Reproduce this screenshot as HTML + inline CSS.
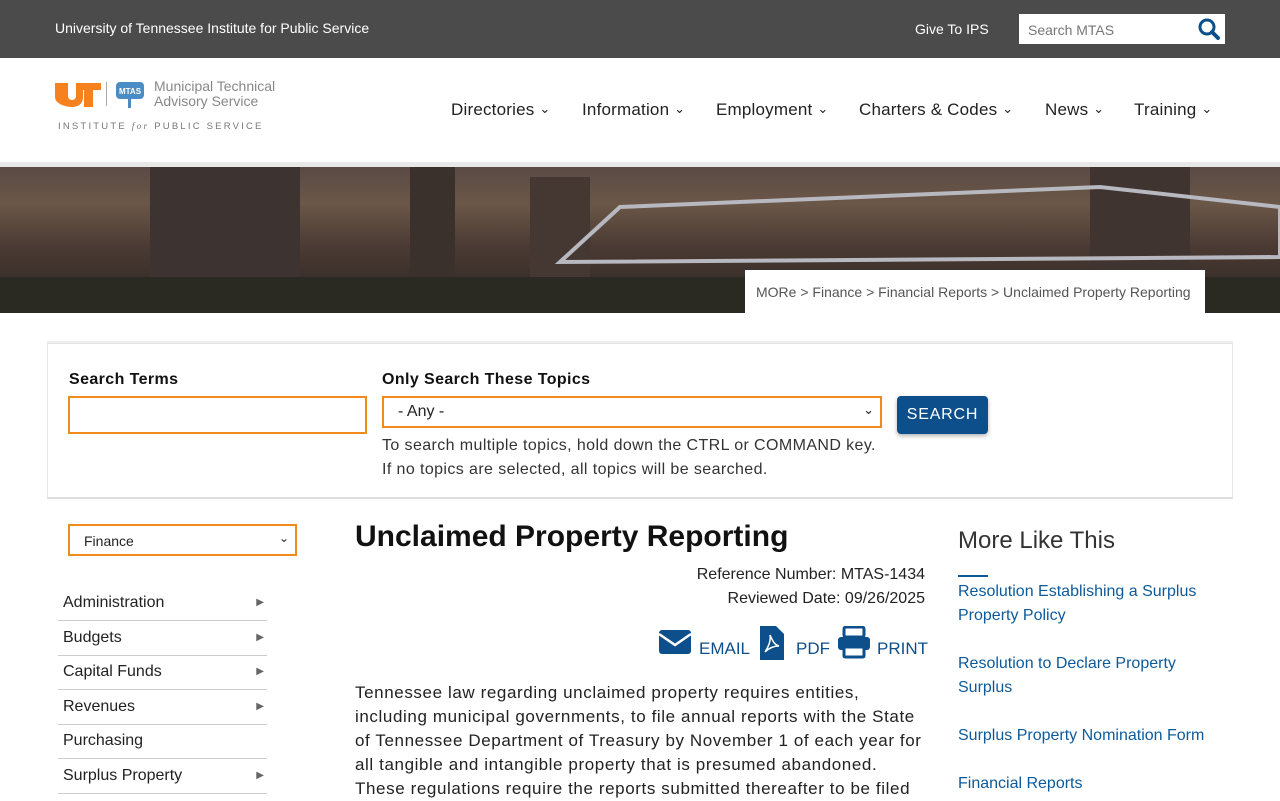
<!DOCTYPE html>
<html><head><meta charset="utf-8"><style>
*{box-sizing:border-box;margin:0;padding:0}
body{width:1280px;height:800px;overflow:hidden;background:#fff;font-family:"Liberation Sans",Arial,sans-serif;color:#222}
.top{height:58px;background:#4b4b4b;color:#fff;position:relative;font-size:14px}
.top .l{position:absolute;left:55px;top:20px}
.top .g{position:absolute;left:915px;top:21px}
.top .s{position:absolute;left:1019px;top:14px;width:206px;height:30px;background:#fff}
.top .s span{position:absolute;left:9px;top:8px;color:#777;font-size:14px}
.top .s .b{position:absolute;right:2px;top:2px;width:28px;height:26px}
.hdr{position:relative;height:109px;border-bottom:5px solid #e8e8e8}
.nav{position:absolute;top:42px;font-size:17px;color:#222;letter-spacing:.2px}
.nav small{font-size:13px;position:relative;top:-2px}
.banner{height:146px;position:relative;background:linear-gradient(180deg,#5a4a44 0%,#6b5748 25%,#4a3a33 55%,#2c2420 100%);overflow:hidden}
.bc{position:absolute;left:745px;top:270px;width:460px;height:43px;background:#fff;font-size:14px;color:#555;padding:14px 0 0 11px}
.search{position:absolute;left:47px;top:343px;width:1186px;height:156px;border:1px solid #e5e5e5;border-bottom:2px solid #ddd;box-shadow:0 -2px 0 #eee}
.lbl{position:absolute;font-weight:bold;font-size:16px;letter-spacing:.4px;color:#111}
.inp{position:absolute;border:2px solid #f08a1c;background:#fff}
.hint{position:absolute;left:382px;font-size:16px;color:#333;letter-spacing:.4px}
.btn{position:absolute;left:897px;top:396px;width:91px;height:38px;background:#0d4f8b;color:#fff;border-radius:4px;font-size:16px;letter-spacing:.8px;text-align:center;line-height:38px;box-shadow:0 2px 4px rgba(0,0,0,.3)}
.side a{position:absolute;left:58px;width:209px;height:35px;border-bottom:1px solid #ccc;font-size:16px;color:#222;padding:8px 0 0 5px}
.side a i{position:absolute;right:3px;top:11px;font-style:normal;font-size:10px;color:#666}
h1{position:absolute;left:355px;top:520px;font-size:30px;font-weight:bold;color:#111}
.meta{position:absolute;right:355px;font-size:16px;color:#222;text-align:right}
.body{position:absolute;left:355px;top:681px;width:572px;font-size:17px;line-height:24px;color:#222;letter-spacing:.6px}
.more{position:absolute;left:958px;font-size:16px;color:#0d5a9b;line-height:24px}
</style></head><body>
<div class="top"><span class="l">University of Tennessee Institute for Public Service</span><span class="g">Give To IPS</span>
<div class="s"><span>Search MTAS</span><svg class="b" viewBox="0 0 28 26"><circle cx="12" cy="11" r="7" fill="none" stroke="#0d4f8b" stroke-width="3"/><path d="M17 16l6 6" stroke="#0d4f8b" stroke-width="4" stroke-linecap="round"/></svg></div></div>
<div class="hdr">
<svg style="position:absolute;left:55px;top:22px" width="230" height="52" viewBox="0 0 230 52">
<path d="M0 3h13v12c0 3 1 5 4 5s4-2 4-5V3h25v7h-8v17h-9V10h-1v7c0 7-5 10-11 10S0 24 0 17z" fill="#f5821f"/>
<rect x="51" y="2" width="1" height="24" fill="#aaa"/>
<rect x="61" y="2" width="28" height="17" rx="4" fill="#4a8cc4"/><text x="75" y="14" font-size="8" fill="#fff" text-anchor="middle" font-family="Liberation Sans" font-weight="bold">MTAS</text><rect x="73" y="19" width="3" height="9" fill="#4a8cc4"/>
<text x="99" y="11" font-size="14" fill="#888" font-family="Liberation Sans">Municipal Technical</text>
<text x="99" y="26" font-size="14" fill="#888" font-family="Liberation Sans">Advisory Service</text>
<text x="3" y="49" font-size="9.5" fill="#777" letter-spacing="2.2" font-family="Liberation Sans">INSTITUTE <tspan font-style="italic" font-family="Liberation Serif">for</tspan> PUBLIC SERVICE</text>
</svg>
<span class="nav" style="left:451px">Directories <small>⌄</small></span>
<span class="nav" style="left:582px">Information <small>⌄</small></span>
<span class="nav" style="left:716px">Employment <small>⌄</small></span>
<span class="nav" style="left:859px">Charters &amp; Codes <small>⌄</small></span>
<span class="nav" style="left:1045px">News <small>⌄</small></span>
<span class="nav" style="left:1134px">Training <small>⌄</small></span>
</div>
<div class="banner">
<svg width="1280" height="146" style="position:absolute;left:0;top:0"><rect x="150" y="0" width="150" height="146" fill="#3d3330"/><rect x="410" y="0" width="45" height="146" fill="#3a302c"/><rect x="530" y="10" width="60" height="136" fill="#453833"/><rect x="1090" y="0" width="100" height="146" fill="#3f3430"/><path d="M560 95 L620 40 L1100 20 L1280 40 V90 Z" fill="none" stroke="#b8b8c0" stroke-width="4"/><rect x="0" y="110" width="1280" height="36" fill="#2a2a22"/></svg>
</div>
<div class="bc">MORe &gt; Finance &gt; Financial Reports &gt; Unclaimed Property Reporting</div>
<div class="search"></div>
<span class="lbl" style="left:69px;top:371px">Search Terms</span>
<span class="lbl" style="left:382px;top:371px">Only Search These Topics</span>
<div class="inp" style="left:68px;top:396px;width:299px;height:38px"></div>
<div class="inp" style="left:382px;top:396px;width:500px;height:32px;font-size:16px;padding:5px 14px">- Any -<span style="position:absolute;right:6px;top:4px;font-size:13px">⌄</span></div>
<div class="hint" style="top:437px">To search multiple topics, hold down the CTRL or COMMAND key.</div>
<div class="hint" style="top:461px">If no topics are selected, all topics will be searched.</div>
<div class="btn">SEARCH</div>
<div class="inp" style="left:68px;top:524px;width:229px;height:32px;font-size:14px;padding:7px 14px">Finance<span style="position:absolute;right:6px;top:5px;font-size:12px">⌄</span></div>
<div class="side">
<a style="top:586px">Administration<i>▶</i></a>
<a style="top:621px">Budgets<i>▶</i></a>
<a style="top:655px">Capital Funds<i>▶</i></a>
<a style="top:690px">Revenues<i>▶</i></a>
<a style="top:724px">Purchasing</a>
<a style="top:759px">Surplus Property<i>▶</i></a>
</div>
<h1>Unclaimed Property Reporting</h1>
<div class="meta" style="top:566px">Reference Number: MTAS-1434</div>
<div class="meta" style="top:590px">Reviewed Date: 09/26/2025</div>
<svg style="position:absolute;left:658px;top:626px" width="270" height="34" viewBox="0 0 270 34">
<rect x="1" y="4" width="32" height="24" rx="3" fill="#0d4f8b"/><path d="M1 8l16 11 16-11" fill="none" stroke="#fff" stroke-width="2.5"/>
<text x="41" y="28" font-size="17" fill="#0d4f8b" font-family="Liberation Sans">EMAIL</text>
<path d="M102 0h16l8 8v26h-24z" fill="#0d4f8b"/><path d="M107 26c4-6 6-12 5-17c3 7 5 10 9 11c-5 0-10 2-14 6" fill="none" stroke="#fff" stroke-width="1.5"/>
<text x="138" y="28" font-size="17" fill="#0d4f8b" font-family="Liberation Sans">PDF</text>
<rect x="186" y="1" width="20" height="10" rx="2" fill="none" stroke="#0d4f8b" stroke-width="3"/><rect x="180" y="11" width="32" height="13" rx="3" fill="#0d4f8b"/><rect x="186" y="21" width="20" height="10" rx="1" fill="#fff" stroke="#0d4f8b" stroke-width="3"/>
<text x="219" y="28" font-size="17" fill="#0d4f8b" font-family="Liberation Sans">PRINT</text>
</svg>
<div class="body">Tennessee law regarding unclaimed property requires entities, including municipal governments, to file annual reports with the State of Tennessee Department of Treasury by November 1 of each year for all tangible and intangible property that is presumed abandoned. These regulations require the reports submitted thereafter to be filed</div>
<div style="position:absolute;left:958px;top:527px;font-size:24px;color:#333">More Like This</div>
<div style="position:absolute;left:958px;top:575px;width:30px;height:2px;background:#0d5a9b"></div>
<div class="more" style="top:580px">Resolution Establishing a Surplus<br>Property Policy</div>
<div class="more" style="top:652px">Resolution to Declare Property<br>Surplus</div>
<div class="more" style="top:724px">Surplus Property Nomination Form</div>
<div class="more" style="top:772px">Financial Reports</div>
</body></html>
